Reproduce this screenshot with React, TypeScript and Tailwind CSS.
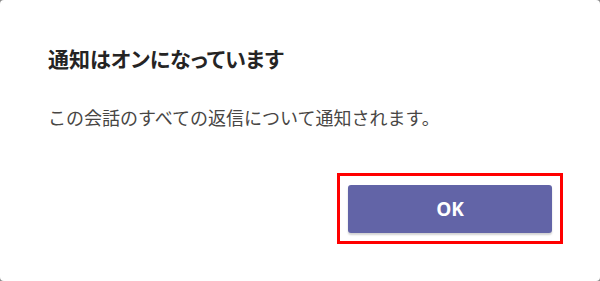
import React from "react";

export default function App() {
  return (
    <div className="w-[600px] h-[281px] bg-[#8a8a8a]">
      <div className="w-full h-full bg-white rounded-[4px] flex flex-col pl-[48px] pr-[37px] pt-[42px] font-['Noto_Sans_CJK_JP','Noto_Sans',sans-serif]">
        <h1 className="text-[21px] leading-[32px] font-bold text-[#252424] [font-feature-settings:'palt']">
          通知はオンになっています
        </h1>
        <p className="mt-[30px] text-[18px] leading-[26px] text-[#484644]">
          この会話のすべての返信について通知されます。
        </p>
        <div className="flex justify-end mt-[43px]">
          <div className="border-[3px] border-[#ff0000] px-[8px] pt-[9px] pb-[8px]">
            <button className="w-[204px] h-[48px] rounded-[3px] bg-[#6264a7] text-white text-[19px] font-bold shadow-[0_2px_2px_rgba(0,0,0,0.18)] font-['Open_Sans','Noto_Sans',sans-serif]">
              OK
            </button>
          </div>
        </div>
      </div>
    </div>
  );
}
